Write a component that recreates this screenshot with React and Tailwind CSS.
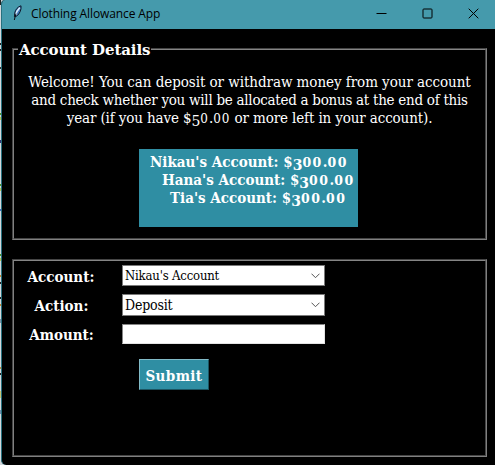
const serif =
  "font-['DejaVu_Serif_Condensed','DejaVu_Serif',serif]";

// Old-style figures: zeros sit at x-height, threes and fives hang below the baseline.
function Amount({ lead, bold }) {
  return (
    <>
      $<span className="relative top-[3px] font-['DejaVu_Serif'] text-[14px] leading-none tracking-normal">{lead}</span>
      {bold ? (
        <>
          <span className="font-['DejaVu_Serif'] text-[12.5px] leading-none tracking-[1.5px]">00</span>.
          <span className="font-['DejaVu_Serif'] text-[12.5px] leading-none tracking-[1.5px]">00</span>
        </>
      ) : (
        <>
          <span className="font-['DejaVu_Serif'] text-[12px] leading-none tracking-[1px]">0</span>.
          <span className="font-['DejaVu_Serif'] text-[12px] leading-none tracking-[1px]">00</span>
        </>
      )}
    </>
  );
}

function Feather() {
  return (
    <svg className="h-4 w-3" viewBox="0 0 12 16">
      <path d="M9 0.8C6 1.6 3.2 4.6 2.7 8.2L2.4 11.8L5 10.9C7.6 8.8 9.6 4.8 9 0.8Z" fill="#3f78be" stroke="#101b2b" strokeWidth="1" />
      <path d="M7.8 2.6C6 4.4 4.4 6.8 3.8 10" fill="none" stroke="#d8ecfa" strokeWidth="1.5" />
      <path d="M4 8.5L2.3 15" fill="none" stroke="#0c1118" strokeWidth="1" />
    </svg>
  );
}

function Select({ children, className }) {
  return (
    <div className={"flex w-[203px] items-center justify-between border border-[#7a7a7a] bg-white pr-1 pl-[2px] text-black " + className}>
      <span className="whitespace-nowrap">{children}</span>
      <svg className="h-[6px] w-[9px]" viewBox="0 0 9 6" fill="none" stroke="#555" strokeWidth="1">
        <path d="M0.5 0.7L4.5 4.7L8.5 0.7" />
      </svg>
    </div>
  );
}

function Frame({ className, children }) {
  return (
    <div className={"w-[475px] border border-t-[#454545] border-r-[#808080] border-b-[#808080] border-l-[#454545] " + className}>
      <div className="h-full border border-t-[#858585] border-r-[#454545] border-b-[#454545] border-l-[#808080]">
        {children}
      </div>
    </div>
  );
}

const label = "flex w-[94px] justify-center text-[15px] font-bold whitespace-nowrap leading-[18px]";

export default function App() {
  return (
    <div className={"flex h-[465px] w-[495px] overflow-hidden bg-[#d3d8dc] text-white " + serif}>
      <div className="flex w-px flex-col">
        <i className="h-[5px] bg-[#222]" />
        <i className="mt-[38px] h-[2px] bg-[#222]" />
        <i className="mt-[4px] h-[2px] bg-[#222]" />
        <i className="mt-[16px] h-[2px] bg-[#333]" />
        <i className="mt-[44px] h-[2px] bg-[#4d9a2b]" />
        <i className="mt-[2px] h-[3px] bg-[#b5c654]" />
        <i className="mt-[20px] h-[3px] bg-[#333377]" />
        <i className="mt-[41px] h-[2px] bg-[#4d9a2b]" />
        <i className="mt-[2px] h-[3px] bg-[#b5c654]" />
        <i className="mt-[18px] h-[2px] bg-[#4169c0]" />
        <i className="mt-[43px] h-[2px] bg-[#4d9a2b]" />
        <i className="mt-[2px] h-[3px] bg-[#b5c654]" />
        <i className="mt-[14px] h-[2px] bg-[#c48a35]" />
        <i className="mt-[5px] h-[2px] bg-[#222]" />
        <i className="mt-[13px] h-[2px] bg-[#222]" />
        <i className="mt-[5px] h-[2px] bg-[#c48a35]" />
        <i className="mt-[13px] h-[4px] bg-[#7a93a8]" />
        <i className="mt-[44px] h-[2px] bg-[#b98d3c]" />
        <i className="mt-[4px] h-[2px] bg-[#222]" />
        <i className="mt-[16px] h-[7px] bg-[#c8c777]" />
        <i className="mt-[12px] h-[4px] bg-[#6c8fae]" />
      </div>

      <div className="flex grow flex-col overflow-hidden rounded-tl-[4px] rounded-bl-[5px] border-l border-[#27717f] bg-black">
        <header className="flex h-[29px] shrink-0 items-center bg-[#459aac] text-black">
          <div className="flex w-[29px] justify-center pl-[3px] pb-[3px]">
            <Feather />
          </div>
          <span className="pb-px font-['Open_Sans',sans-serif] text-[12px] tracking-[-0.1px] whitespace-nowrap">
            Clothing Allowance App
          </span>
          <div className="mr-[16px] mb-[3px] ml-auto flex items-center gap-[35px]">
            <svg className="h-[11px] w-[11px]" viewBox="0 0 11 11" fill="none" stroke="#000">
              <path d="M0.5 5.5H10.5" />
            </svg>
            <svg className="h-[11px] w-[11px]" viewBox="0 0 11 11" fill="none" stroke="#000">
              <rect x="1" y="1" width="9" height="9" rx="0.8" />
            </svg>
            <svg className="h-[11px] w-[11px]" viewBox="0 0 11 11" fill="none" stroke="#000">
              <path d="M0.7 0.7L10.3 10.3M10.3 0.7L0.7 10.3" />
            </svg>
          </div>
        </header>

        <main className="flex flex-col pl-[10px]">
          <Frame className="mt-[19px] h-[192px]">
            <h1 className="-mt-[11px] ml-1 w-[133px] bg-black pl-px font-['DejaVu_Serif'] text-[15px] leading-[22px] font-bold tracking-[-0.1px] whitespace-nowrap">
              Account Details
            </h1>
            <p className="mt-[12px] flex flex-col items-center text-[15px] leading-[18px] whitespace-nowrap">
              <span className="tracking-[-0.06px]">Welcome! You can deposit or withdraw money from your account</span>
              <span className="tracking-[-0.27px]">and check whether you will be allocated a bonus at the end of this</span>
              <span className="h-[18px] tracking-[-0.13px]">
                year (if you have <Amount lead="5" /> or more left in your account).
              </span>
            </p>
            <div className="mt-[22px] ml-[125px] h-[78px] w-[219px] bg-[#2f8ea3] pt-[4px] text-[15px] leading-[18px] font-bold whitespace-pre">
              <div className="h-[18px] pl-[11px]">Nikau's Account: <Amount lead="3" bold /></div>
              <div className="h-[18px] pl-[23px]">Hana's Account: <Amount lead="3" bold /></div>
              <div className="h-[18px] pl-[31px]">Tia's Account: <Amount lead="3" bold /></div>
            </div>
          </Frame>

          <Frame className="mt-[19px] h-[198px]">
            <div className="mt-[4px] flex flex-col">
              <div className="flex h-[21px] items-center">
                <div className={label + " pt-[2px]"}>Account:</div>
                <Select className="ml-[14px] h-[21px] text-[13px] tracking-[-0.18px]">Nikau's Account</Select>
              </div>
              <div className="mt-[8px] flex h-[22px] items-center">
                <div className={label + " pt-[2px] pl-px"}>Action:</div>
                <Select className="ml-[14px] h-[22px] text-[14px] tracking-[-0.2px]">Deposit</Select>
              </div>
              <div className="mt-[8px] flex h-[20px] items-center">
                <div className={label + " pt-[2px] pl-px"}>Amount:</div>
                <div className="ml-[14px] h-[20px] w-[203px] border border-t-[#858585] border-r-[#e3e3e3] border-b-[#e3e3e3] border-l-[#858585] bg-white" />
              </div>
              <button className="mt-[15px] ml-[125px] h-[31px] w-[70px] border border-t-[#82bbc8] border-r-[#1c5562] border-b-[#1c5562] border-l-[#82bbc8] bg-[#2f8ea3] pt-[3px] text-[15px] font-bold tracking-[0.4px]">
                Submit
              </button>
            </div>
          </Frame>
        </main>
      </div>
    </div>
  );
}
